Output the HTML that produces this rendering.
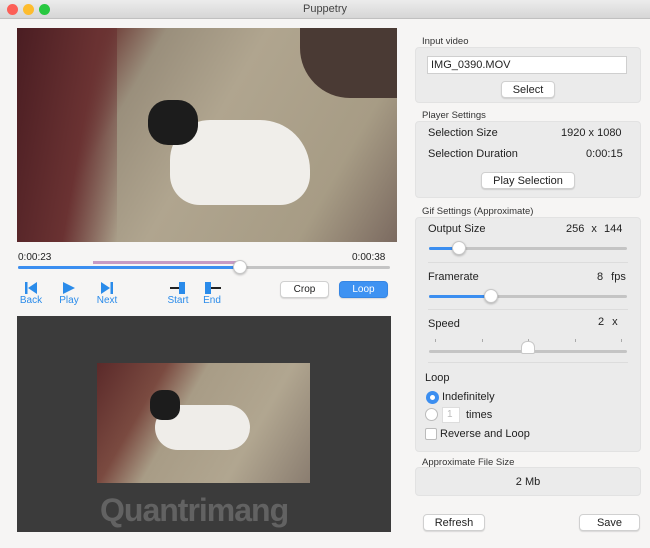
<!DOCTYPE html><html><head><style>
*{margin:0;padding:0;box-sizing:border-box}
body{width:650px;height:548px;background:#f6f5f4;font-family:"Liberation Sans",sans-serif;font-size:11px;color:#222;position:relative;overflow:hidden}
.a{position:absolute}
.box{position:absolute;background:#ebebeb;border-radius:4px;border:1px solid #e2e2e2}
.lbl{position:absolute;font-size:9.5px;color:#333}
.btn{position:absolute;background:#fff;border:1px solid #d0d0d0;border-radius:4px;text-align:center;box-shadow:0 1px 1px rgba(0,0,0,.12);font-size:11px}
.track{position:absolute;height:3px;background:#c4c4c4;border-radius:2px}
.fill{position:absolute;height:3px;background:#3b8ef0;border-radius:2px}
.knob{position:absolute;width:14px;height:14px;border-radius:50%;background:#fff;border:1px solid #c8c8c8;box-shadow:0 1px 2px rgba(0,0,0,.25)}
.sep{position:absolute;left:428px;width:200px;height:1px;background:#dcdcdc}
.ic{position:absolute;color:#2a8bea;font-size:10px;text-align:center;width:30px}
.tk{position:absolute;top:339px;width:1px;height:3px;background:#aaa}
</style></head><body>
<div class="a" style="left:0;top:0;width:650px;height:19px;background:linear-gradient(#ececec,#d6d6d6);border-bottom:1px solid #c0c0c0"></div>
<div class="a" style="left:7px;top:4px;width:11px;height:11px;border-radius:50%;background:#fc5f57"></div>
<div class="a" style="left:23px;top:4px;width:11px;height:11px;border-radius:50%;background:#fdbc2e"></div>
<div class="a" style="left:39px;top:4px;width:11px;height:11px;border-radius:50%;background:#28c840"></div>
<div class="a" style="left:0;top:3px;width:650px;text-align:center;font-size:11px;color:#444">Puppetry</div>

<div class="a" style="left:17px;top:28px;width:380px;height:214px;background:linear-gradient(120deg,#5b2a2a 0%,#6d3b36 18%,#9a8f7c 30%,#b0a58f 50%,#a79c85 80%,#7b6a60 100%)"></div>
<div class="a" style="left:17px;top:28px;width:100px;height:214px;background:linear-gradient(100deg,#4a1d22,#6a3232 60%,rgba(0,0,0,0))"></div>
<div class="a" style="left:300px;top:28px;width:97px;height:70px;background:#4a3a34;border-bottom-left-radius:50px"></div>
<div class="a" style="left:170px;top:120px;width:140px;height:85px;background:#f0eeea;border-radius:40px 50px 30px 30px"></div>
<div class="a" style="left:148px;top:100px;width:50px;height:45px;background:#1c1c1c;border-radius:20px"></div>

<div class="a" style="left:18px;top:252px;font-size:10px">0:00:23</div>
<div class="a" style="left:352px;top:252px;font-size:10px">0:00:38</div>
<div class="a" style="left:93px;top:261px;width:147px;height:3px;background:#c79bc4"></div>
<div class="track" style="left:18px;top:266px;width:372px"></div>
<div class="fill" style="left:18px;top:266px;width:222px"></div>
<div class="knob" style="left:233px;top:260px"></div>

<svg class="a" style="left:24px;top:282px" width="14" height="12"><rect x="1" y="0" width="2.5" height="12" fill="#2a8bea"/><path d="M13 0L4 6L13 12Z" fill="#2a8bea"/></svg>
<svg class="a" style="left:62px;top:282px" width="14" height="12"><path d="M1 0L13 6L1 12Z" fill="#2a8bea"/></svg>
<svg class="a" style="left:100px;top:282px" width="14" height="12"><path d="M1 0L10 6L1 12Z" fill="#2a8bea"/><rect x="10.5" y="0" width="2.5" height="12" fill="#2a8bea"/></svg>
<svg class="a" style="left:170px;top:282px" width="16" height="12"><rect x="0" y="5" width="10" height="2" fill="#222"/><rect x="9" y="0" width="6" height="12" fill="#2a8bea"/></svg>
<svg class="a" style="left:205px;top:282px" width="16" height="12"><rect x="0" y="0" width="6" height="12" fill="#2a8bea"/><rect x="6" y="5" width="10" height="2" fill="#222"/></svg>
<div class="ic" style="left:16px;top:295px">Back</div>
<div class="ic" style="left:54px;top:295px">Play</div>
<div class="ic" style="left:92px;top:295px">Next</div>
<div class="ic" style="left:163px;top:295px">Start</div>
<div class="ic" style="left:197px;top:295px">End</div>
<div class="btn" style="left:280px;top:281px;width:49px;height:17px;line-height:16px;font-size:10px">Crop</div>
<div class="btn" style="left:339px;top:281px;width:49px;height:17px;line-height:16px;font-size:10px;background:#3e92f2;border-color:#3686e4;color:#fff">Loop</div>

<div class="a" style="left:17px;top:316px;width:374px;height:216px;background:#3b3b3b"></div>
<div class="a" style="left:97px;top:363px;width:213px;height:120px;background:linear-gradient(120deg,#5b2a2a 0%,#7a4a40 25%,#a89c86 40%,#b1a690 70%,#8a7d70 100%)"></div>
<div class="a" style="left:155px;top:405px;width:95px;height:45px;background:#efede9;border-radius:25px"></div>
<div class="a" style="left:150px;top:390px;width:30px;height:30px;background:#1c1c1c;border-radius:12px"></div>
<div class="a" style="left:100px;top:492px;font-size:32px;color:rgba(255,255,255,.2);font-weight:bold;letter-spacing:-1px">Quantrimang</div>

<div class="lbl" style="left:422px;top:36px">Input video</div>
<div class="box" style="left:415px;top:47px;width:226px;height:56px"></div>
<div class="a" style="left:427px;top:56px;width:200px;height:18px;background:#fff;border:1px solid #cfcfcf;font-size:11px;padding:2px 3px">IMG_0390.MOV</div>
<div class="btn" style="left:501px;top:81px;width:54px;height:17px;line-height:16px">Select</div>

<div class="lbl" style="left:422px;top:110px">Player Settings</div>
<div class="box" style="left:415px;top:121px;width:226px;height:77px"></div>
<div class="a" style="left:428px;top:127px">Selection Size</div>
<div class="a" style="left:561px;top:127px">1920 x 1080</div>
<div class="a" style="left:428px;top:148px">Selection Duration</div>
<div class="a" style="left:586px;top:148px">0:00:15</div>
<div class="btn" style="left:481px;top:172px;width:94px;height:17px;line-height:16px">Play Selection</div>

<div class="lbl" style="left:422px;top:206px">Gif Settings (Approximate)</div>
<div class="box" style="left:415px;top:217px;width:226px;height:235px"></div>
<div class="a" style="left:428px;top:223px">Output Size</div>
<div class="a" style="left:566px;top:223px;word-spacing:4px">256 x 144</div>
<div class="track" style="left:429px;top:247px;width:198px"></div>
<div class="fill" style="left:429px;top:247px;width:30px"></div>
<div class="knob" style="left:452px;top:241px"></div>
<div class="sep" style="top:262px"></div>
<div class="a" style="left:428px;top:271px">Framerate</div>
<div class="a" style="left:597px;top:271px;word-spacing:5px">8 fps</div>
<div class="track" style="left:429px;top:295px;width:198px"></div>
<div class="fill" style="left:429px;top:295px;width:62px"></div>
<div class="knob" style="left:484px;top:289px"></div>
<div class="sep" style="top:309px"></div>
<div class="a" style="left:428px;top:318px">Speed</div>
<div class="a" style="left:598px;top:316px;word-spacing:5px">2 x</div>
<div class="tk" style="left:435px"></div><div class="tk" style="left:482px"></div><div class="tk" style="left:528px"></div><div class="tk" style="left:575px"></div><div class="tk" style="left:621px"></div>
<div class="track" style="left:429px;top:350px;width:198px"></div>
<div class="a" style="left:521px;top:341px;width:14px;height:13px;background:#fff;border:1px solid #c8c8c8;border-radius:6px 6px 2px 2px"></div>
<div class="sep" style="top:362px"></div>
<div class="a" style="left:425px;top:372px">Loop</div>
<div class="a" style="left:426px;top:391px;width:13px;height:13px;border-radius:50%;background:#3b8ef0"><div class="a" style="left:4px;top:4px;width:5px;height:5px;border-radius:50%;background:#fff"></div></div>
<div class="a" style="left:442px;top:391px">Indefinitely</div>
<div class="a" style="left:425px;top:408px;width:13px;height:13px;border-radius:50%;background:#fff;border:1px solid #bbb"></div>
<div class="a" style="left:442px;top:407px;width:18px;height:16px;background:#fff;border:1px solid #ddd;color:#bbb;font-size:10px;padding:1px 4px">1</div>
<div class="a" style="left:466px;top:409px">times</div>
<div class="a" style="left:425px;top:428px;width:12px;height:12px;background:#fff;border:1px solid #bbb;border-radius:2px"></div>
<div class="a" style="left:440px;top:428px">Reverse and Loop</div>

<div class="lbl" style="left:422px;top:457px">Approximate File Size</div>
<div class="box" style="left:415px;top:467px;width:226px;height:29px"></div>
<div class="a" style="left:415px;top:476px;width:226px;text-align:center">2 Mb</div>
<div class="btn" style="left:423px;top:514px;width:62px;height:17px;line-height:16px">Refresh</div>
<div class="btn" style="left:579px;top:514px;width:61px;height:17px;line-height:16px">Save</div>
</body></html>
